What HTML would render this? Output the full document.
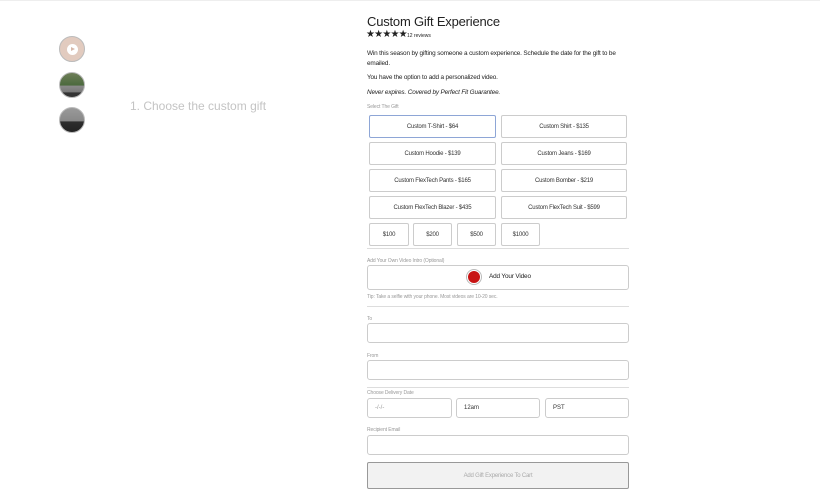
<!DOCTYPE html>
<html><head><meta charset="utf-8">
<style>
*{box-sizing:border-box;margin:0;padding:0}
body{width:820px;height:500px;background:#fff;font-family:"Liberation Sans",sans-serif;color:#222;position:relative;overflow:hidden}
.a{position:absolute}
.t{font-size:6.4px;color:#222;letter-spacing:-0.15px}
.lbl{font-size:5px;color:#999;letter-spacing:-0.1px}
.btn{position:absolute;border:1px solid #ccc;border-radius:2px;font-size:6px;color:#333;display:flex;align-items:center;justify-content:center;letter-spacing:-0.2px;background:#fff}
.inp{position:absolute;border:1px solid #ccc;border-radius:3px;background:#fff;font-size:6px;color:#333;padding-left:7px;display:flex;align-items:center}
.hr{position:absolute;left:367px;width:262px;height:1px;background:#ddd}
.th{position:absolute;left:59px;width:26px;height:26px;border-radius:50%;border:1px solid #bbb;overflow:hidden}
</style></head><body>
<div class="a" style="left:0;top:0;width:820px;height:1px;background:#eee"></div>
<div class="th" style="top:36px;background:#e2cbbf;display:flex;align-items:center;justify-content:center"><div style="width:11px;height:11px;border-radius:50%;background:#fff;position:relative"><div style="position:absolute;left:4px;top:3px;border-left:4px solid #d6b8aa;border-top:2.5px solid transparent;border-bottom:2.5px solid transparent"></div></div></div>
<div class="th" style="top:72px;background:linear-gradient(#6e7e58 0,#4c6a3e 50%,#8a8a8a 55%,#777 80%,#333 81%)"></div>
<div class="th" style="top:107px;background:linear-gradient(#9a9a9a 0,#888 55%,#2e2e2e 56%,#222)"></div>
<div class="a" style="left:130px;top:99px;font-size:12px;color:#c4c4c4">1. Choose the custom gift</div>

<div class="a" style="left:367px;top:14px;font-size:13px;color:#222;letter-spacing:-0.2px">Custom Gift Experience</div>
<div class="a" style="left:366px;top:29px;font-size:10px;color:#222;letter-spacing:-0.8px">★★★★★</div>
<div class="a" style="left:407px;top:33px;font-size:5px;color:#222">12 reviews</div>
<div class="a t" style="left:367px;top:49px;width:250px;line-height:10px">Win this season by gifting someone a custom experience. Schedule the date for the gift to be emailed.</div>
<div class="a t" style="left:367px;top:74px">You have the option to add a personalized video.</div>
<div class="a t" style="left:367px;top:89px;font-style:italic">Never expires. Covered by Perfect Fit Guarantee.</div>
<div class="a lbl" style="left:367px;top:104px">Select The Gift</div>

<div class="btn" style="left:369px;top:115px;width:127px;height:23px;border-color:#8ea6d6">Custom T-Shirt - $64</div>
<div class="btn" style="left:501px;top:115px;width:126px;height:23px">Custom Shirt - $135</div>
<div class="btn" style="left:369px;top:142px;width:127px;height:23px">Custom Hoodie - $139</div>
<div class="btn" style="left:501px;top:142px;width:126px;height:23px">Custom Jeans - $169</div>
<div class="btn" style="left:369px;top:169px;width:127px;height:23px">Custom FlexTech Pants - $165</div>
<div class="btn" style="left:501px;top:169px;width:126px;height:23px">Custom Bomber - $219</div>
<div class="btn" style="left:369px;top:196px;width:127px;height:23px">Custom FlexTech Blazer - $435</div>
<div class="btn" style="left:501px;top:196px;width:126px;height:23px">Custom FlexTech Suit - $599</div>
<div class="btn" style="left:369px;top:223px;width:40px;height:23px">$100</div>
<div class="btn" style="left:413px;top:223px;width:39px;height:23px">$200</div>
<div class="btn" style="left:457px;top:223px;width:39px;height:23px">$500</div>
<div class="btn" style="left:501px;top:223px;width:39px;height:23px">$1000</div>
<div class="hr" style="top:248px"></div>

<div class="a lbl" style="left:367px;top:258px">Add Your Own Video Intro (Optional)</div>
<div class="inp" style="left:367px;top:265px;width:262px;height:25px;padding:0"></div>
<div class="a" style="left:466px;top:269px;width:16px;height:16px;border-radius:50%;border:1px solid #bbb;background:#fff"></div>
<div class="a" style="left:468px;top:271px;width:12px;height:12px;border-radius:50%;background:#c81414"></div>
<div class="a t" style="left:489px;top:273px">Add Your Video</div>
<div class="a lbl" style="left:367px;top:294px">Tip: Take a selfie with your phone. Most videos are 10-20 sec.</div>
<div class="hr" style="top:306px"></div>

<div class="a lbl" style="left:367px;top:316px">To</div>
<div class="inp" style="left:367px;top:323px;width:262px;height:20px"></div>
<div class="a lbl" style="left:367px;top:353px">From</div>
<div class="inp" style="left:367px;top:360px;width:262px;height:20px"></div>
<div class="hr" style="top:387px"></div>
<div class="a lbl" style="left:367px;top:390px">Choose Delivery Date</div>
<div class="inp" style="left:367px;top:398px;width:85px;height:20px;color:#999">-/-/-</div>
<div class="inp" style="left:456px;top:398px;width:84px;height:20px">12am</div>
<div class="inp" style="left:545px;top:398px;width:84px;height:20px">PST</div>
<div class="a lbl" style="left:367px;top:427px">Recipient Email</div>
<div class="inp" style="left:367px;top:435px;width:262px;height:20px"></div>
<div class="btn" style="left:367px;top:462px;width:262px;height:27px;background:#f2f2f2;border-color:#999;color:#aaa">Add Gift Experience To Cart</div>
</body></html>
